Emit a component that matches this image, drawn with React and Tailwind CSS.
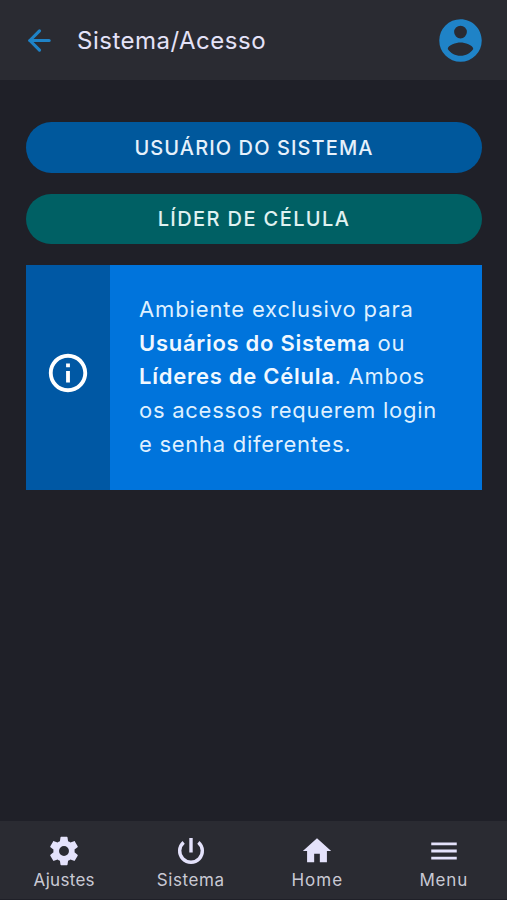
import { ArrowLeft } from "lucide-react";
import { MdHome, MdInfoOutline, MdMenu } from "react-icons/md";

function AccountIcon({ className }) {
  return (
    <svg viewBox="0 0 24 24" fill="currentColor" className={className}>
      <path d="M12,19.2C9.5,19.2 7.29,17.92 6,16C6.03,14 10,12.9 12,12.9C14,12.9 17.97,14 18,16C16.71,17.92 14.5,19.2 12,19.2M12,5A3,3 0 0,1 15,8A3,3 0 0,1 12,11A3,3 0 0,1 9,8A3,3 0 0,1 12,5M12,2A10,10 0 0,0 2,12A10,10 0 0,0 12,22A10,10 0 0,0 22,12C22,6.47 17.5,2 12,2Z" />
    </svg>
  );
}

function CogIcon({ className }) {
  return (
    <svg viewBox="0 0 24 24" fill="currentColor" className={className}>
      <path d="M12,15.5A3.5,3.5 0 0,1 8.5,12A3.5,3.5 0 0,1 12,8.5A3.5,3.5 0 0,1 15.5,12A3.5,3.5 0 0,1 12,15.5M19.43,12.97C19.47,12.65 19.5,12.33 19.5,12C19.5,11.67 19.47,11.34 19.43,11L21.54,9.37C21.73,9.22 21.78,8.95 21.66,8.73L19.66,5.27C19.54,5.05 19.27,4.96 19.05,5.05L16.56,6.05C16.04,5.66 15.5,5.32 14.87,5.07L14.5,2.42C14.46,2.18 14.25,2 14,2H10C9.75,2 9.54,2.18 9.5,2.42L9.13,5.07C8.5,5.32 7.96,5.66 7.44,6.05L4.95,5.05C4.73,4.96 4.46,5.05 4.34,5.27L2.34,8.73C2.21,8.95 2.27,9.22 2.46,9.37L4.57,11C4.53,11.34 4.5,11.67 4.5,12C4.5,12.33 4.53,12.65 4.57,12.97L2.46,14.63C2.27,14.78 2.21,15.05 2.34,15.27L4.34,18.73C4.46,18.95 4.73,19.03 4.95,18.95L7.44,17.94C7.96,18.34 8.5,18.68 9.13,18.93L9.5,21.58C9.54,21.82 9.75,22 10,22H14C14.25,22 14.46,21.82 14.5,21.58L14.87,18.93C15.5,18.67 16.04,18.34 16.56,17.94L19.05,18.95C19.27,19.03 19.54,18.95 19.66,18.73L21.66,15.27C21.78,15.05 21.73,14.78 21.54,14.63L19.43,12.97Z" />
    </svg>
  );
}

function PowerIcon({ className }) {
  return (
    <svg viewBox="0 0 24 24" fill="none" stroke="currentColor" strokeWidth="2.4" className={className}>
      <path d="M12 2.8v10.3M17.2 5.9a8 8 0 1 1-10.4 0" />
    </svg>
  );
}

const tabs = [
  { label: "Ajustes", icon: CogIcon, spacing: "tracking-[0.3px]" },
  { label: "Sistema", icon: PowerIcon, spacing: "tracking-[0.6px]" },
  { label: "Home", icon: MdHome, spacing: "tracking-[1px]" },
  { label: "Menu", icon: MdMenu, spacing: "tracking-[0.8px]" },
];

export default function App() {
  return (
    <div className="flex h-screen w-full flex-col bg-[#1f2028] font-['Inter',sans-serif]">
      <header className="flex h-20 shrink-0 items-center bg-[#2a2b32] pr-[21px] pl-[23px]">
        <button aria-label="Voltar">
          <ArrowLeft strokeWidth={2.3} className="size-[33px] text-[#1f83c7]" />
        </button>
        <h1 className="ml-[21px] flex-1 pt-px text-2xl tracking-[0.5px] text-[#e4e2f8]">Sistema/Acesso</h1>
        <button aria-label="Perfil">
          <AccountIcon className="size-[51px] text-[#1f83c7]" />
        </button>
      </header>

      <main className="flex flex-1 flex-col gap-[21px] pt-[42px] pr-[25px] pl-[26px]">
        <button className="h-[50.5px] rounded-full bg-[#00589c] pt-px text-xl font-medium tracking-[1.1px] text-[#e6f1fb]">
          USUÁRIO DO SISTEMA
        </button>
        <button className="h-[50.5px] rounded-full bg-[#006064] text-xl font-medium tracking-[1.4px] text-[#e0f2f1]">
          LÍDER DE CÉLULA
        </button>

        <section className="flex h-[224.5px] bg-[#0074dc]">
          <div className="flex w-[84px] items-center justify-center bg-[#0058a4] pb-2">
            <MdInfoOutline className="size-[46px] text-white" />
          </div>
          <p className="flex-1 pt-7 pl-[29px] text-[22px] leading-[33.7px] whitespace-nowrap text-[#dff0ff]">
            <span className="tracking-[0.87px]">Ambiente exclusivo para</span>
            <br />
            <span className="tracking-[0.72px]">
              <strong className="font-semibold text-[#f0f8ff]">Usuários do Sistema</strong> ou
            </span>
            <br />
            <span className="tracking-[0.74px]">
              <strong className="font-semibold text-[#f0f8ff]">Líderes de Célula</strong>. Ambos
            </span>
            <br />
            <span className="tracking-[0.74px]">os acessos requerem login</span>
            <br />
            <span className="tracking-[0.72px]">e senha diferentes.</span>
          </p>
        </section>
      </main>

      <nav className="grid h-[79px] shrink-0 grid-cols-4 border-b border-[#1f2028] bg-[#2a2b32] pl-px">
        {tabs.map(({ label, icon: Icon, spacing }) => (
          <button key={label} className="flex flex-col items-center pt-[13px]">
            <Icon className="size-[34px] text-[#e4e2fb]" />
            <span className={`text-[17px] leading-6 text-[#c9c9d4] ${spacing}`}>{label}</span>
          </button>
        ))}
      </nav>
    </div>
  );
}
